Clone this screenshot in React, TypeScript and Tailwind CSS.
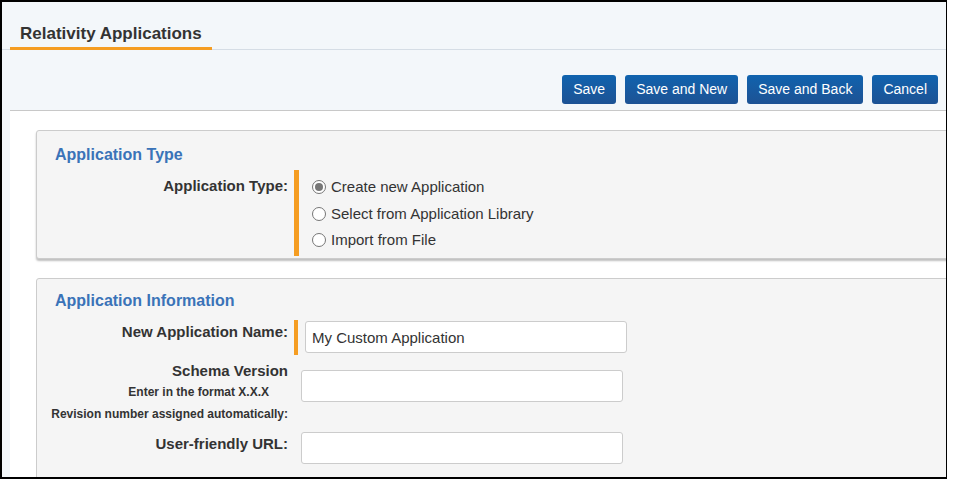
const font = { fontFamily: 'Arial, "Liberation Sans", sans-serif' };

function Radio({ checked, label }: { checked?: boolean; label: string }) {
  return (
    <label className="flex items-center gap-[5px] h-[26.5px] text-[15px] text-[#333]">
      <span className="w-[14px] h-[14px] rounded-full border border-[#767676] bg-white flex items-center justify-center">
        {checked && <span className="w-[8px] h-[8px] rounded-full bg-[#777]" />}
      </span>
      {label}
    </label>
  );
}

export default function App() {
  const btn = 'h-[29px] px-[11px] rounded-[3px] bg-gradient-to-b from-[#0f63ae] to-[#1c5294] text-white text-[14px]';
  return (
    <div className="bg-white w-[962px] h-[494px]" style={font}>
      <div className="w-[947px] h-[479px] border-y-2 border-l-2 border-r border-black overflow-hidden bg-[#f3f7fa] relative">
        {/* title tab */}
        <div className="h-[48px] flex items-end pl-[8px] border-b border-[#d5dde5]">
          <div className="px-[10px] pb-[1px] border-b-[3px] border-[#f59d22] -mb-[1px] text-[17px] font-bold text-[#333]">Relativity Applications</div>
        </div>
        {/* toolbar */}
        <div className="ml-[8px] h-[61px] border-b border-[#c8c8c8] flex items-center justify-end gap-[9px] pr-[8px] pt-[18px]">
          <button className={btn}>Save</button>
          <button className={btn}>Save and New</button>
          <button className={btn}>Save and Back</button>
          <button className={btn}>Cancel</button>
        </div>
        <div className="ml-[8px] bg-white h-[400px] pl-[26px] pt-[19px]">
          {/* panel 1 */}
          <div className="w-[940px] h-[129px] bg-[#f5f5f5] border border-[#ccc] rounded-[3px] shadow-[0_2px_2px_rgba(0,0,0,0.25)]">
            <div className="pl-[18px] pt-[12px] text-[16px] font-bold text-[#3a73b8]">Application Type</div>
            <div className="flex mt-[3px]">
              <div className="w-[251px] text-right text-[15px] font-bold text-[#333] pt-[5px]">Application Type:</div>
              <div className="ml-[6px] w-[5px] h-[86px] bg-[#f59d22]" />
              <div className="ml-[13px] mt-[4px]">
                <Radio checked label="Create new Application" />
                <Radio label="Select from Application Library" />
                <Radio label="Import from File" />
              </div>
            </div>
          </div>
          {/* panel 2 */}
          <div className="mt-[19px] w-[940px] h-[220px] bg-[#f5f5f5] border border-[#ccc] rounded-[3px]">
            <div className="pl-[18px] pt-[10px] text-[16px] font-bold text-[#3a73b8]">Application Information</div>
            <div className="flex mt-[7px]">
              <div className="w-[251px] text-right text-[15px] font-bold text-[#333] pt-[1px]">New Application Name:</div>
              <div className="ml-[6px] w-[4px] h-[35px] bg-[#f59d22]" />
              <input readOnly value="My Custom Application" className="ml-[7px] mt-[1px] w-[322px] h-[32px] px-[6px] text-[15px] text-[#333] bg-white border border-[#ccc] rounded-[3px] outline-none" style={font} />
            </div>
            <div className="flex mt-[6px]">
              <div className="w-[251px] text-right text-[#333] font-bold">
                <div className="text-[15px] leading-[20px]">Schema Version</div>
                <div className="text-[12px] leading-[22px] pr-[19px]">Enter in the format X.X.X</div>
                <div className="text-[12px] leading-[22px]">Revision number assigned automatically:</div>
              </div>
              <input readOnly className="ml-[13px] mt-[9px] w-[322px] h-[32px] bg-white border border-[#ccc] rounded-[3px] outline-none" />
            </div>
            <div className="flex mt-[7px]">
              <div className="w-[251px] text-right text-[15px] font-bold text-[#333] pt-[1px]">User-friendly URL:</div>
              <input readOnly className="ml-[13px] w-[322px] h-[32px] bg-white border border-[#ccc] rounded-[3px] outline-none" />
            </div>
          </div>
        </div>
      </div>
    </div>
  );
}
